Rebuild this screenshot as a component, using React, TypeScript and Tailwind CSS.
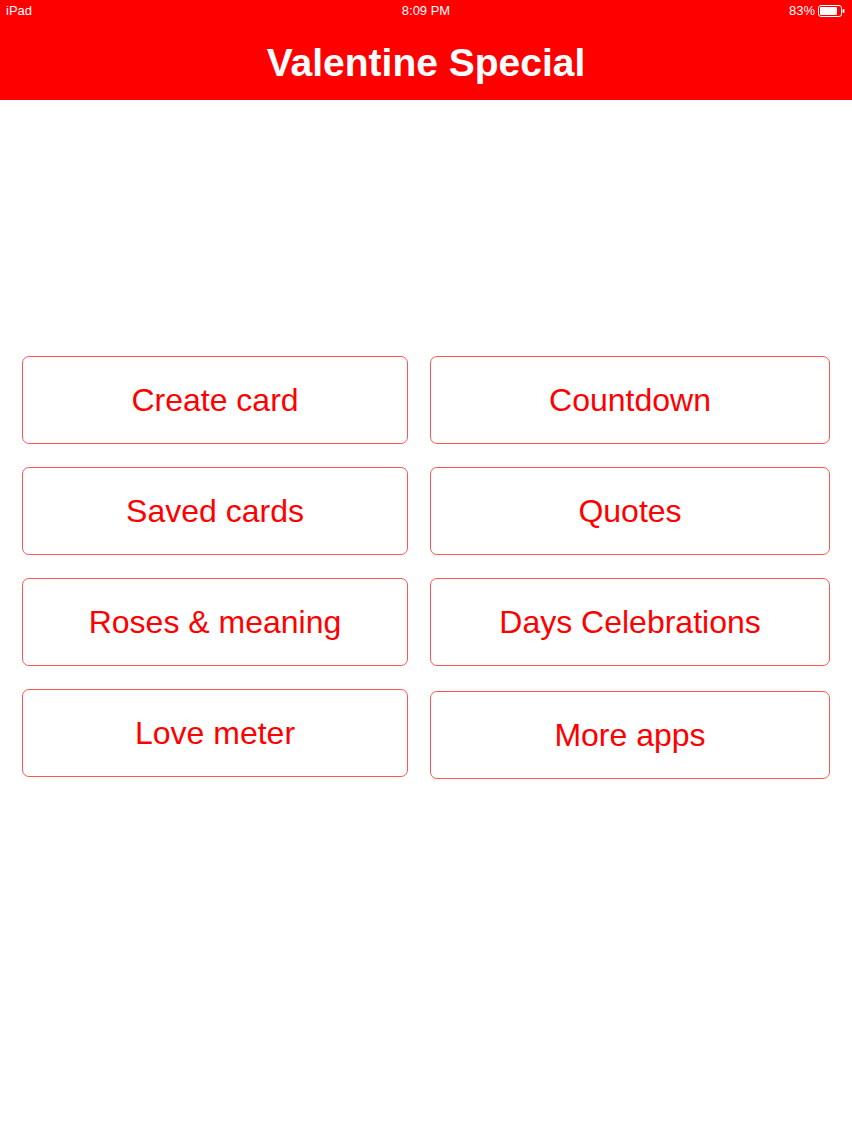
import React from "react";

const left = ["Create card", "Saved cards", "Roses & meaning", "Love meter"];
const right = ["Countdown", "Quotes", "Days Celebrations", "More apps"];

function MenuButton({ label, className = "" }: { label: string; className?: string }) {
  return (
    <button
      className={`h-[88px] w-full rounded-[7px] border border-[#f55] bg-white text-[32px] text-[#f00] flex items-center justify-center ${className}`}
    >
      {label}
    </button>
  );
}

export default function App() {
  return (
    <div
      className="min-h-[1136px] w-[852px] bg-white"
      style={{ fontFamily: '"Liberation Sans", Arial, sans-serif' }}
    >
      {/* Header */}
      <div className="bg-[#ff0000] h-[100px] text-white">
        <div className="relative flex h-[22px] items-center justify-between px-[6px] text-[13px]">
          <span>iPad</span>
          <span className="absolute left-1/2 -translate-x-1/2">8:09 PM</span>
          <div className="flex items-center gap-[3px]">
            <span>83%</span>
            <svg width="28" height="12" viewBox="0 0 28 12">
              <rect x="0.5" y="0.5" width="23" height="11" rx="2.5" fill="none" stroke="white" />
              <rect x="2" y="2" width="17" height="8" rx="1" fill="white" />
              <rect x="24.5" y="4" width="2" height="4" rx="1" fill="white" />
            </svg>
          </div>
        </div>
        <div className="flex h-[78px] items-center justify-center pt-[4px]">
          <h1 className="text-[39px] font-bold">Valentine Special</h1>
        </div>
      </div>

      {/* Menu */}
      <div className="flex gap-[22px] px-[22px] pt-[256px]">
        <div className="flex w-[386px] flex-col gap-[23px]">
          {left.map((l) => (
            <MenuButton key={l} label={l} />
          ))}
        </div>
        <div className="flex w-[400px] flex-col gap-[23px]">
          {right.map((r, i) => (
            <MenuButton key={r} label={r} className={i === 3 ? "mt-[2px]" : ""} />
          ))}
        </div>
      </div>
    </div>
  );
}
